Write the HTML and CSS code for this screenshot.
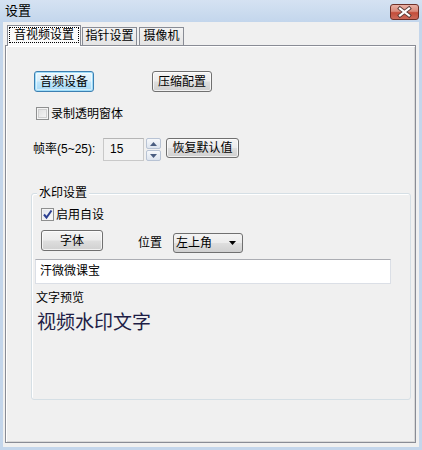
FILE: index.html
```html
<!DOCTYPE html>
<html lang="zh">
<head>
<meta charset="utf-8">
<title>设置</title>
<link rel="stylesheet" href="styles.css">
</head>
<body>
<div class="window">
  <div class="titlebar">
    <span class="title">设置</span>
    <div class="close">
      <svg width="27" height="14" viewBox="0 0 27 14">
        <path d="M9 3.5 L18 10.5 M18 3.5 L9 10.5" stroke="#5a3a36" stroke-width="4" stroke-linecap="square"/>
        <path d="M9 3.5 L18 10.5 M18 3.5 L9 10.5" stroke="#ffffff" stroke-width="2.2" stroke-linecap="square"/>
      </svg>
    </div>
  </div>
  <div class="client">
    <div class="tabs">
      <div class="tab active"><span class="focus">音视频设置</span></div>
      <div class="tab t2">指针设置</div>
      <div class="tab t3">摄像机</div>
    </div>
    <div class="panel">
      <div class="row btnrow">
        <div class="btn focused">音频设备</div>
        <div class="btn">压缩配置</div>
      </div>
      <div class="check r2"><span class="box"></span><span class="ctext">录制透明窗体</span></div>
      <div class="row fps">
        <span class="fpslabel">帧率(5~25):</span>
        <div class="numbox">15</div>
        <div class="spin">
          <div class="sbtn"><svg width="7" height="4" viewBox="0 0 7 4"><path d="M0 4 L3.5 0 L7 4 Z" fill="#4a5d80"/></svg></div>
          <div class="sbtn"><svg width="7" height="4" viewBox="0 0 7 4"><path d="M0 0 L3.5 4 L7 0 Z" fill="#4a5d80"/></svg></div>
        </div>
        <div class="btn reset">恢复默认值</div>
      </div>
      <div class="group">
        <span class="legend">水印设置</span>
        <div class="check g1"><span class="box checked"><svg width="11" height="11" viewBox="0 0 11 11"><path d="M2 5.5 L4.5 8.5 L9.5 1.5" stroke="#2b3f92" stroke-width="2" fill="none"/></svg></span><span class="ctext">启用自设</span></div>
        <div class="row grow">
          <div class="btn fontbtn">字体</div>
          <span class="poslabel">位置</span>
          <div class="select"><span>左上角</span><svg width="7" height="4" viewBox="0 0 7 4"><path d="M0 0 L3.5 4 L7 0 Z" fill="#000"/></svg></div>
        </div>
        <div class="textbox">汗微微课宝</div>
        <div class="plabel">文字预览</div>
        <div class="preview">视频水印文字</div>
      </div>
    </div>
  </div>
</div>
</body>
</html>
```

FILE: styles.css
```css
* { box-sizing: border-box; }
html, body { margin: 0; padding: 0; }
body {
  width: 422px;
  height: 450px;
  overflow: hidden;
  background: #c4d6eb;
  font-family: "Liberation Sans", "Noto Sans CJK SC", sans-serif;
  font-size: 12px;
  color: #000;
}
.window { display: flex; flex-direction: column; height: 450px; }
.titlebar {
  height: 22px;
  flex: none;
  display: flex;
  justify-content: space-between;
  align-items: center;
  padding: 0 3px 0 5px;
  background: linear-gradient(#d5e2f2, #c3d6ec);
}
.title { font-size: 13px; line-height: 14px; }
.close {
  align-self: flex-start;
  margin-top: 4px;
  width: 29px;
  height: 16px;
  border: 1px solid #6e3028;
  border-radius: 3px;
  background: linear-gradient(#eab1a5 0%, #d98a7b 45%, #c44d3a 55%, #cd6a5a 100%);
  display: flex;
  align-items: center;
  justify-content: center;
}
.close svg { display: block; }
.client {
  flex: 1;
  margin: 0 3px 3px 3px;
  padding: 3px 3px 4px 2px;
  background: #f0f0f0;
  display: flex;
  flex-direction: column;
}
.tabs {
  height: 20px;
  flex: none;
  display: flex;
  align-items: flex-end;
  padding-left: 2px;
  position: relative;
  z-index: 1;
}
.tab {
  height: 18px;
  border: 1px solid #898c95;
  border-bottom: none;
  background: linear-gradient(#f3f3f3, #e4e4e4);
  line-height: 16px;
  text-align: center;
}
.tab.t2 { width: 55px; margin-left: 1px; }
.tab.t3 { width: 45px; margin-left: 2px; }
.tab.active {
  width: 74px;
  height: 21px;
  margin-bottom: -1px;
  background: #fafafa;
  padding: 1px 1px 0 1px;
}
.focus {
  display: block;
  height: 16px;
  border: 1px dotted #000;
  line-height: 14px;
  text-align: center;
}
.panel {
  flex: 1;
  border: 1px solid #898c95;
  background: #f0f0f0;
  box-shadow: inset 1px 1px 0 #ffffff, inset -1px -1px 0 #d8d8d8;
  display: flex;
  flex-direction: column;
}
.row { display: flex; }
.btn {
  height: 21px;
  border: 1px solid #707070;
  border-radius: 3px;
  background: linear-gradient(#f4f4f4 0%, #ececec 48%, #dedede 52%, #d0d0d0 100%);
  box-shadow: inset 0 0 0 1px rgba(255,255,255,0.7);
  display: flex;
  align-items: center;
  justify-content: center;
  line-height: 14px;
}
.btnrow { margin-top: 25px; padding-left: 28px; gap: 58px; }
.btnrow .btn { width: 60px; }
.btn.focused {
  border-color: #3c7fb1;
  background: linear-gradient(#e8f5fc 0%, #d9effb 48%, #bee6fd 52%, #a7d9f5 100%);
  box-shadow: inset 0 0 0 1px #9fdcf8, inset 0 0 0 2px rgba(255,255,255,0.5);
}
.check { display: flex; align-items: center; height: 13px; }
.check.r2 { margin-top: 15px; padding-left: 30px; }
.box {
  width: 13px;
  height: 13px;
  border: 1px solid #8e8f8f;
  background: linear-gradient(135deg, #dcdcdc, #f8f8f8);
  box-shadow: inset 0 0 0 1px #f4f4f4, inset 0 0 0 2px #cfcfcf;
  flex: none;
  display: flex;
  align-items: center;
  justify-content: center;
}
.box.checked { background: linear-gradient(135deg, #e0e4ec, #fafafa); box-shadow: inset 0 0 0 1px #f4f4f4; }
.box svg { display: block; }
.ctext { margin-left: 2px; line-height: 14px; }
.fps { margin-top: 18px; padding-left: 27px; align-items: flex-start; }
.fpslabel { width: 70px; line-height: 14px; margin-top: 4px; }
.numbox {
  width: 41px;
  height: 23px;
  border: 1px solid #c9c9c9;
  border-top-color: #b5b5b5;
  background: #f2f2f2;
  padding-left: 6px;
  line-height: 21px;
}
.spin {
  width: 15px;
  height: 23px;
  margin-left: 2px;
  display: flex;
  flex-direction: column;
  gap: 1px;
}
.sbtn {
  flex: 1;
  border: 1px solid #b8c3d4;
  border-radius: 2px;
  background: linear-gradient(#f6f8fb, #dde4ee);
  display: flex;
  align-items: center;
  justify-content: center;
}
.sbtn svg { display: block; }
.btn.reset { width: 73px; height: 20px; margin-left: 5px; }
.group {
  position: relative;
  margin: 32px 0 0 25px;
  width: 380px;
  height: 207px;
  border: 1px solid #d5dfe5;
  border-radius: 3px;
  box-shadow: inset 1px 1px 0 #ffffff;
  display: flex;
  flex-direction: column;
}
.legend {
  position: absolute;
  top: -8px;
  left: 5px;
  padding: 0 2px;
  background: #f0f0f0;
  line-height: 14px;
}
.check.g1 { margin-top: 14px; padding-left: 9px; }
.grow { margin-top: 9px; padding-left: 9px; align-items: flex-start; }
.btn.fontbtn { width: 62px; }
.poslabel { margin-left: 35px; margin-top: 6px; line-height: 14px; }
.select {
  width: 70px;
  height: 20px;
  margin-left: 11px;
  margin-top: 3px;
  border: 1px solid #707070;
  border-radius: 3px;
  background: linear-gradient(#f4f4f4 0%, #ececec 48%, #dedede 52%, #d0d0d0 100%);
  display: flex;
  align-items: center;
  justify-content: space-between;
  padding: 0 6px 0 2px;
  line-height: 14px;
}
.select svg { display: block; }
.textbox {
  margin: 6px 0 0 3px;
  width: 356px;
  height: 25px;
  background: #fff;
  border: 1px solid #dbdfe6;
  border-top-color: #abadb3;
  padding-left: 4px;
  line-height: 23px;
}
.plabel { margin: 7px 0 0 4px; line-height: 14px; }
.preview {
  margin: 7px 0 0 5px;
  font-size: 19px;
  line-height: 22px;
  color: #1e1e46;
}
```
